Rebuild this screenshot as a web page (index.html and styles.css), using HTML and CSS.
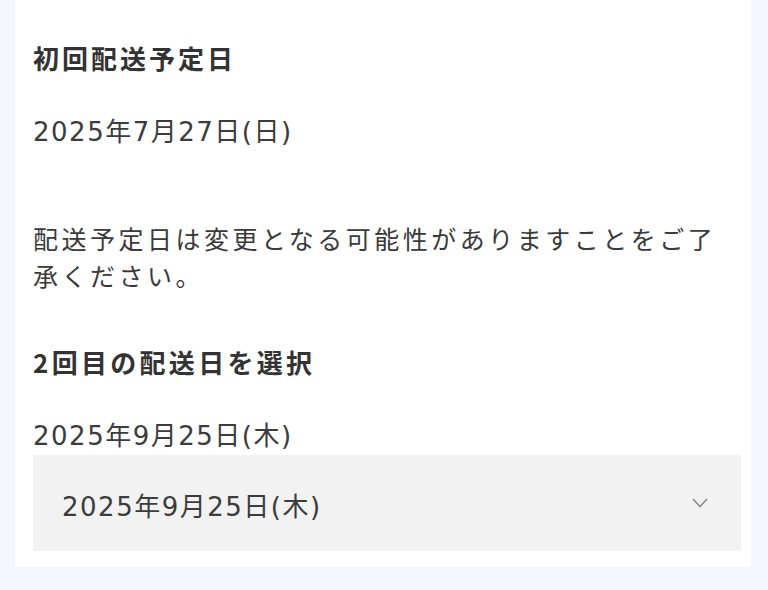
FILE: index.html
```html
<!DOCTYPE html>
<html lang="ja">
<head>
<meta charset="UTF-8">
<title>配送日</title>
<link rel="stylesheet" href="styles.css">
</head>
<body>
<div class="card">
  <h2 class="title">初回配送予定日</h2>
  <p class="date">2025年7月27日(日)</p>
  <p class="note">配送予定日は変更となる可能性がありますことをご了承ください。</p>
  <h2 class="title second">2回目の配送日を選択</h2>
  <p class="date label">2025年9月25日(木)</p>
  <div class="select-box">
    <span class="date select-value">2025年9月25日(木)</span>
    <svg class="chevron" width="20" height="12" viewBox="0 0 20 12">
      <path d="M3 2 L10 9.5 L17 2" fill="none" stroke="#8a8a8a" stroke-width="1.6"/>
    </svg>
  </div>
</div>
</body>
</html>
```

FILE: styles.css
```css
body {
  margin: 0;
  background: #f3f6fd;
  font-family: "Noto Sans CJK JP", "Noto Sans", sans-serif;
  color: #3a3a3a;
}

.card {
  background: #fff;
  margin: 0 17px 0 15px;
  padding: 40px 10px 16px 18px;
}

.title {
  margin: 0;
  font-size: 26px;
  line-height: 36px;
  font-weight: bold;
  color: #333;
  letter-spacing: 3px;
}

.title.second {
  margin-top: 50px;
  letter-spacing: 3.3px;
}

/* 日付は数字が幅広のフォント */
.date {
  margin: 38px 0 0;
  font-family: "DejaVu Sans", "Noto Sans CJK JP", sans-serif;
  font-size: 26px;
  line-height: 36px;
  letter-spacing: 1.5px;
  color: #3c3c3c;
}

.date.label {
  margin-top: 38px;
}

.note {
  margin: 70px 0 0;
  font-size: 25px;
  line-height: 37px;
  letter-spacing: 3.5px;
  padding-right: 5px;
}

.select-box {
  margin-top: 1px;
  height: 96px;
  background: #f2f2f2;
  display: flex;
  align-items: center;
  justify-content: space-between;
  padding: 0 31px 0 29px;
}

.select-value {
  margin: 0;
  padding-top: 8px;
}
```
